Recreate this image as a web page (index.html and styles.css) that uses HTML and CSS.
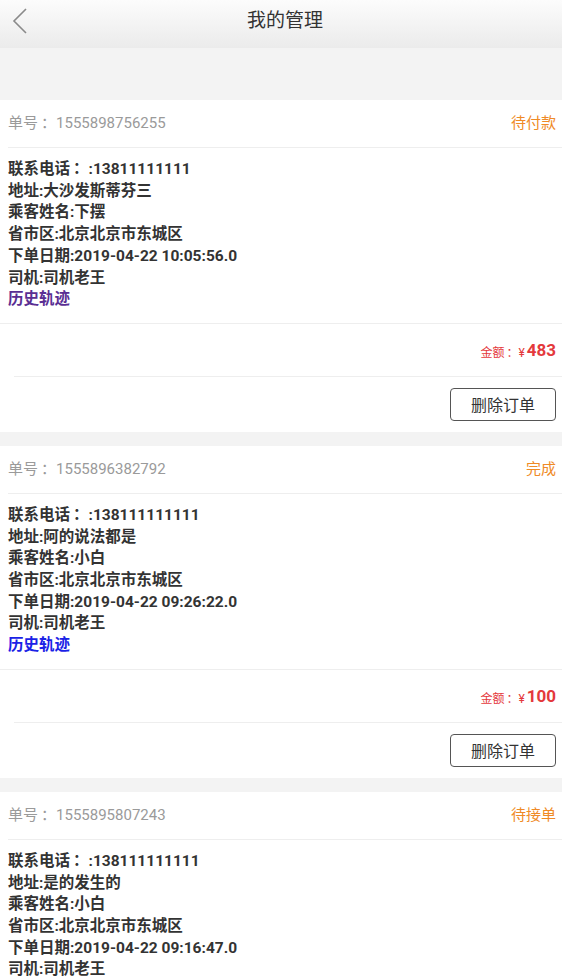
FILE: index.html
```html
<!DOCTYPE html>
<html lang="zh-CN">
<head>
<meta charset="utf-8">
<title>我的管理</title>
<link rel="stylesheet" href="styles.css">
</head>
<body>
<header class="topbar">
  <span class="back">
    <svg width="16" height="28" viewBox="0 0 16 28"><polyline points="14,2 2,14 14,26" fill="none" stroke="#8a8a8a" stroke-width="1.6"/></svg>
  </span>
  <h1 class="title">我的管理</h1>
</header>
<div class="spacer"></div>

<section class="card">
  <div class="order-row"><span class="order-no">单号<span class="colon">：</span>1555898756255</span><span class="status">待付款</span></div>
  <div class="info">
    <p>联系电话<span class="colon">：</span>:13811111111</p>
    <p>地址:大沙发斯蒂芬三</p>
    <p>乘客姓名:下摆</p>
    <p>省市区:北京北京市东城区</p>
    <p>下单日期:2019-04-22 10:05:56.0</p>
    <p>司机:司机老王</p>
    <p><a class="track visited">历史轨迹</a></p>
  </div>
  <div class="amount-row"><span class="amount-label">金额<span class="colon">：</span>¥</span><span class="amount">483</span></div>
  <div class="action-row"><button class="del">删除订单</button></div>
</section>

<section class="card">
  <div class="order-row"><span class="order-no">单号<span class="colon">：</span>1555896382792</span><span class="status">完成</span></div>
  <div class="info">
    <p>联系电话<span class="colon">：</span>:138111111111</p>
    <p>地址:阿的说法都是</p>
    <p>乘客姓名:小白</p>
    <p>省市区:北京北京市东城区</p>
    <p>下单日期:2019-04-22 09:26:22.0</p>
    <p>司机:司机老王</p>
    <p><a class="track">历史轨迹</a></p>
  </div>
  <div class="amount-row"><span class="amount-label">金额<span class="colon">：</span>¥</span><span class="amount">100</span></div>
  <div class="action-row"><button class="del">删除订单</button></div>
</section>

<section class="card">
  <div class="order-row"><span class="order-no">单号<span class="colon">：</span>1555895807243</span><span class="status">待接单</span></div>
  <div class="info">
    <p>联系电话<span class="colon">：</span>:138111111111</p>
    <p>地址:是的发生的</p>
    <p>乘客姓名:小白</p>
    <p>省市区:北京北京市东城区</p>
    <p>下单日期:2019-04-22 09:16:47.0</p>
    <p>司机:司机老王</p>
    <p><a class="track">历史轨迹</a></p>
  </div>
  <div class="amount-row"><span class="amount-label">金额<span class="colon">：</span>¥</span><span class="amount">100</span></div>
  <div class="action-row"><button class="del">删除订单</button></div>
</section>
</body>
</html>
```
FILE: styles.css
```css
* { box-sizing: border-box; }
html, body { margin: 0; padding: 0; }
body {
  background: #f3f3f3;
  font-family: Roboto, "Noto Sans CJK SC", sans-serif;
  color: #333;
  width: 562px;
  overflow: hidden;
}
.topbar {
  height: 48px;
  background: linear-gradient(#fcfcfc, #ebebeb);
  display: flex;
  align-items: center;
  justify-content: center;
  position: relative;
}
.back {
  position: absolute;
  left: 12px;
  top: 7px;
  display: flex;
}
.title {
  margin: 0;
  font-size: 19px;
  font-weight: normal;
  color: #333;
  line-height: 1;
  margin-top: -7px;
  padding-left: 8px;
}
.spacer { height: 52px; }
.card {
  background: #fff;
  margin-bottom: 14px;
}
.colon {
  display: inline-block;
}
.order-row {
  height: 48px;
  display: flex;
  align-items: center;
  justify-content: space-between;
  padding: 0 6px 4px 0;
  margin-left: 8px;
  border-bottom: 1px solid #eeeeee;
  font-size: 15px;
}
.order-no { color: #9a9a9a; }
.order-no .colon { padding-left: 3px; }
.status { color: #ef8a26; }
.info {
  padding: 11px 8px 12px;
  border-bottom: 1px solid #eeeeee;
}
.info p {
  margin: 0;
  font-size: 15.5px;
  line-height: 21.7px;
  font-weight: bold;
  color: #333;
}
.info .colon { padding-left: 3px; }
.track { color: #1a22e6; cursor: pointer; }
.track.visited { color: #5a2e93; }
.amount-row {
  height: 53px;
  display: flex;
  align-items: center;
  justify-content: flex-end;
  padding: 0 6px 0 0;
  margin-left: 14px;
  border-bottom: 1px solid #eeeeee;
  color: #e4393c;
}
.amount-label { font-size: 12px; margin-top: 3px; }
.amount-label .colon { padding-left: 2px; }
.amount { font-size: 17px; font-weight: bold; margin-left: 2px; }
.action-row {
  height: 55px;
  display: flex;
  align-items: center;
  justify-content: flex-end;
  padding: 0 6px 0 0;
}
.del {
  width: 106px;
  height: 33px;
  border: 1px solid #555;
  border-radius: 4px;
  background: #fff;
  font-family: Roboto, "Noto Sans CJK SC", sans-serif;
  font-size: 16px;
  color: #333;
  padding: 0;
}
```
